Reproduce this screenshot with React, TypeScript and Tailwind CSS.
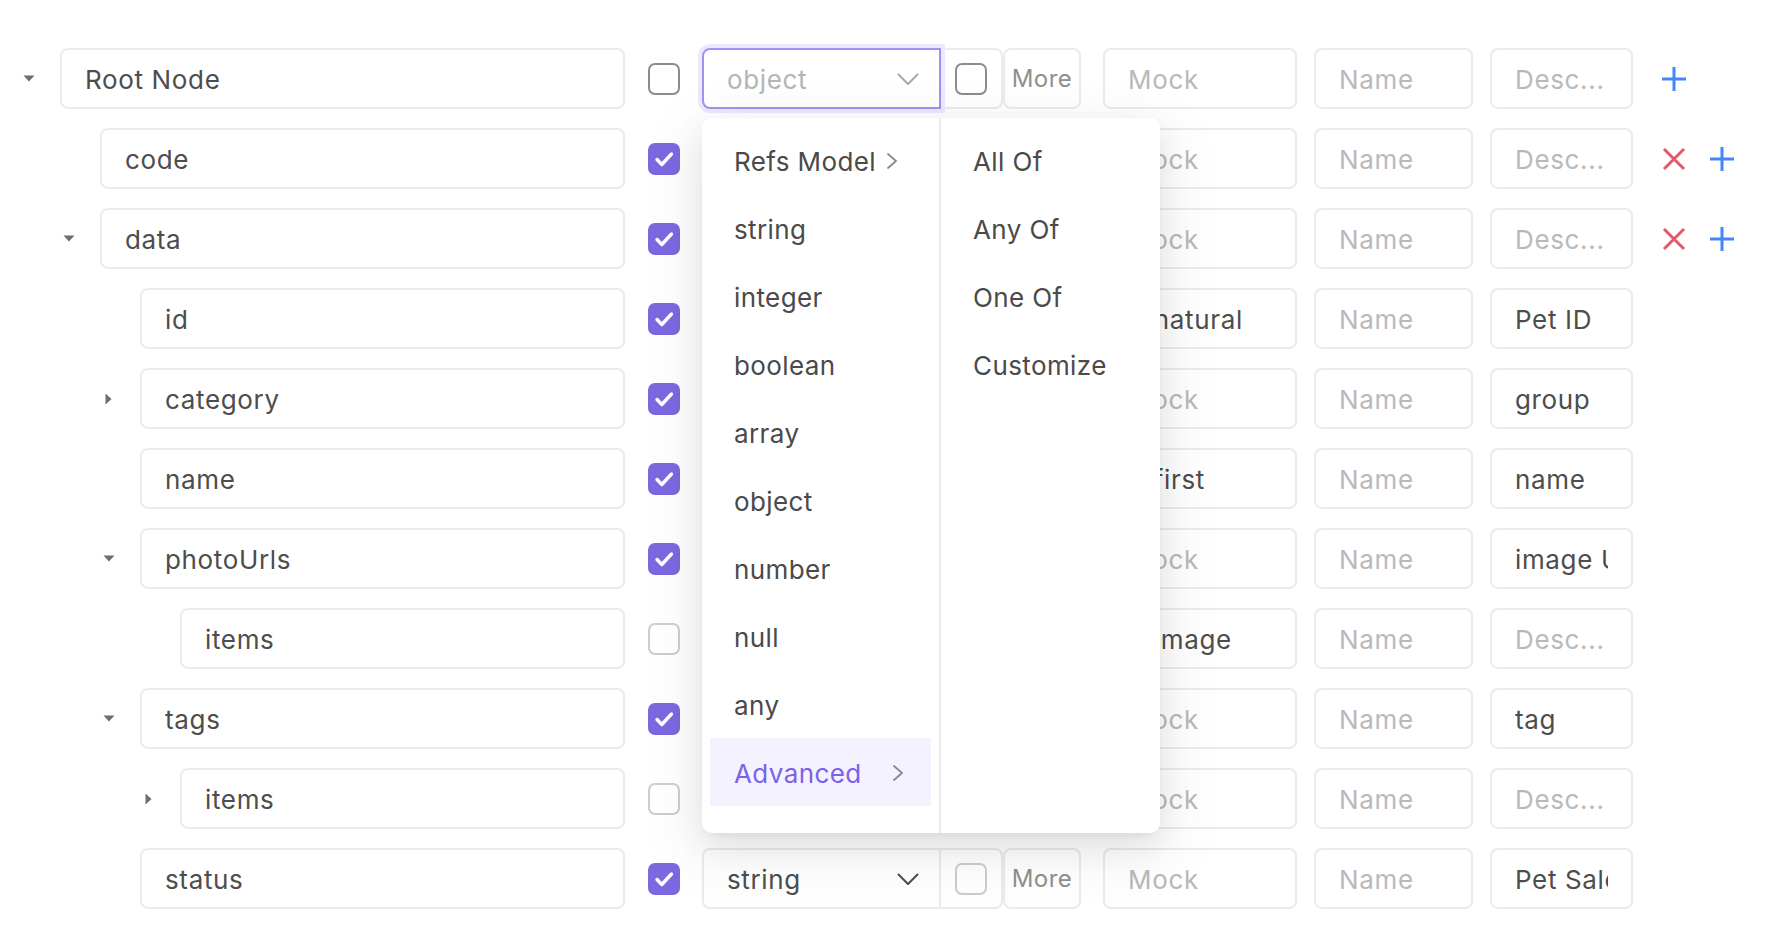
import React from 'react';

type Row = {
  name: string;
  depth: 0 | 1 | 2 | 3;
  arrow?: 'down' | 'right';
  checked: boolean;
  dark?: boolean;
  type: string;
  mock?: string;
  desc?: string;
  actions?: 'plus' | 'both';
};

const rows: Row[] = [
  { name: 'Root Node', depth: 0, arrow: 'down', checked: false, dark: true, type: 'object', actions: 'plus' },
  { name: 'code', depth: 1, checked: true, type: 'integer', actions: 'both' },
  { name: 'data', depth: 1, arrow: 'down', checked: true, type: 'object', actions: 'both' },
  { name: 'id', depth: 2, checked: true, type: 'integer', mock: '@natural', desc: 'Pet ID' },
  { name: 'category', depth: 2, arrow: 'right', checked: true, type: 'object', desc: 'group' },
  { name: 'name', depth: 2, checked: true, type: 'string', mock: '@first', desc: 'name' },
  { name: 'photoUrls', depth: 2, arrow: 'down', checked: true, type: 'array', desc: 'image URLs' },
  { name: 'items', depth: 3, checked: false, type: 'string', mock: '@image' },
  { name: 'tags', depth: 2, arrow: 'down', checked: true, type: 'array', desc: 'tag' },
  { name: 'items', depth: 3, arrow: 'right', checked: false, type: 'object' },
  { name: 'status', depth: 2, checked: true, type: 'string', desc: 'Pet Sales Status' },
];

const indent = ['pl-0', 'pl-[40px]', 'pl-[80px]', 'pl-[120px]'];

const leftItems = ['Refs Model', 'string', 'integer', 'boolean', 'array', 'object', 'number', 'null', 'any', 'Advanced'];
const rightItems = ['All Of', 'Any Of', 'One Of', 'Customize'];

function Field({ value, placeholder, className }: { value?: string; placeholder: string; className: string }) {
  return (
    <input
      readOnly
      value={value ?? ''}
      placeholder={placeholder}
      className={`h-[61px] shrink-0 rounded-[8px] border-2 border-[#ebebeb] bg-white px-[23px] pt-[2px] text-[26px] tracking-[0.025em] text-[#4d4d4d] outline-none placeholder:text-[#b9b9b9] ${className}`}
    />
  );
}

function Checkbox({ checked, dark }: { checked: boolean; dark?: boolean }) {
  if (checked) {
    return (
      <div className="flex h-[32px] w-[32px] shrink-0 items-center justify-center rounded-[7px] bg-[#7e68e0]">
        <svg viewBox="0 0 32 32" width="32" height="32">
          <path d="M9 16.5l4.8 5L23.5 11" stroke="white" strokeWidth="3.4" fill="none" strokeLinecap="round" strokeLinejoin="round" />
        </svg>
      </div>
    );
  }
  return (
    <div
      className={`h-[32px] w-[32px] shrink-0 rounded-[7px] border-2 bg-white ${dark ? 'border-[#8c8c8c]' : 'border-[#cdcdcd]'}`}
    />
  );
}

function Triangle({ dir }: { dir: 'down' | 'right' }) {
  if (dir === 'down') {
    return (
      <svg width="12" height="7" viewBox="0 0 12 7">
        <path d="M0.5 0.5H11.5L6 6.5Z" fill="#6e6e6e" />
      </svg>
    );
  }
  return (
    <svg width="7" height="12" viewBox="0 0 7 12">
      <path d="M0.5 0.5V11.5L6.5 6Z" fill="#6e6e6e" />
    </svg>
  );
}

function Chevron({ color }: { color: string }) {
  return (
    <svg width="22" height="13" viewBox="0 0 22 13">
      <path d="M1.5 1.5L11 11L20.5 1.5" stroke={color} strokeWidth="2" fill="none" strokeLinecap="round" strokeLinejoin="round" />
    </svg>
  );
}

function SmallRight() {
  return (
    <svg width="12" height="18" viewBox="0 0 12 18" className="shrink-0">
      <path d="M2 2L10 9L2 16" stroke="#8a8a8a" strokeWidth="1.8" fill="none" strokeLinecap="round" strokeLinejoin="round" />
    </svg>
  );
}

function Plus() {
  return (
    <svg width="24" height="24" viewBox="0 0 24 24" className="shrink-0">
      <path d="M12 0V24M0 12H24" stroke="#4386f5" strokeWidth="3" />
    </svg>
  );
}

function Cross() {
  return (
    <svg width="24" height="24" viewBox="0 0 24 24" className="shrink-0">
      <path d="M2 2L22 22M22 2L2 22" stroke="#e3596b" strokeWidth="3" />
    </svg>
  );
}

function Dropdown() {
  return (
    <div className="absolute left-0 top-[70px] z-20 flex h-[715px] w-[458px] rounded-[10px] bg-white tracking-[0.025em] shadow-[0_12px_32px_0_rgba(0,0,0,0.08),0_6px_12px_-8px_rgba(0,0,0,0.12),0_18px_56px_16px_rgba(0,0,0,0.05)]">
      <div className="flex w-[239px] shrink-0 flex-col border-r-2 border-[#ececec] px-[8px] pt-[8px]">
        {leftItems.map((it) => {
          const active = it === 'Advanced';
          const hasArrow = it === 'Refs Model' || active;
          return (
            <div
              key={it}
              className={`flex h-[68px] items-center pl-[24px] pr-[27px] pt-[2px] text-[26px] ${
                active ? 'bg-[#f4f2ff] text-[#7b62e8]' : 'text-[#4a4a4a]'
              } ${it === 'Refs Model' ? 'gap-[10px]' : 'justify-between'}`}
            >
              <span className="whitespace-nowrap">{it}</span>
              {hasArrow && <SmallRight />}
            </div>
          );
        })}
      </div>
      <div className="flex flex-1 flex-col px-[8px] pt-[8px]">
        {rightItems.map((it) => (
          <div key={it} className="flex h-[68px] items-center pl-[24px] pt-[2px] text-[26px] text-[#4a4a4a]">
            {it}
          </div>
        ))}
      </div>
    </div>
  );
}

function TypeGroup({ row, focused, covered }: { row: Row; focused: boolean; covered: boolean }) {
  return (
    <div className="relative ml-[22px] flex shrink-0">
      <div
        className={`relative z-[1] flex h-[61px] w-[239px] items-center justify-between rounded-l-[8px] border-2 bg-white pl-[23px] pr-[20px] pt-[2px] text-[26px] tracking-[0.025em] ${
          focused
            ? 'border-[#a391f2] text-[#b5b5b5] shadow-[0_0_0_4px_#ece8fd]'
            : 'border-[#ebebeb] text-[#4d4d4d]'
        }`}
      >
        <span className={covered ? 'invisible' : ''}>{row.type}</span>
        <Chevron color={focused ? '#a9a9a9' : '#4d4d4d'} />
      </div>
      <div className="flex h-[61px] w-[62px] items-center justify-center rounded-r-[8px] border-2 border-l-0 border-[#ebebeb] bg-white">
        <Checkbox checked={false} dark={focused} />
      </div>
      <div className="flex h-[61px] w-[78px] items-center justify-center rounded-[8px] border-2 border-[#ebebeb] bg-white pt-[1px] text-[24px] tracking-[0.02em] text-[#8f8f8f]">
        <span className={covered ? 'invisible' : ''}>More</span>
      </div>
      {focused && <Dropdown />}
    </div>
  );
}

export default function App() {
  return (
    <div className="h-[928px] w-full overflow-hidden bg-white font-['Inter','Noto_Sans',sans-serif]">
      <div className="flex flex-col gap-[19px] pt-[48px]">
        {rows.map((row, i) => (
          <div key={i} className="flex h-[61px] items-center">
            <div className={`flex w-[625px] shrink-0 items-center ${indent[row.depth]}`}>
              <div className="flex w-[60px] shrink-0 justify-center pr-[3px]">
                {row.arrow && <Triangle dir={row.arrow} />}
              </div>
              <Field value={row.name} placeholder="" className="min-w-0 flex-1" />
            </div>
            <div className="ml-[23px] flex">
              <Checkbox checked={row.checked} dark={row.dark} />
            </div>
            <TypeGroup row={row} focused={i === 0} covered={i > 0 && i < rows.length - 1} />
            <Field value={row.mock} placeholder="Mock" className="ml-[22px] w-[194px]" />
            <Field placeholder="Name" className="ml-[17px] w-[159px]" />
            <Field value={row.desc} placeholder="Desc..." className="ml-[17px] w-[143px]" />
            {row.actions && (
              <div className="ml-[29px] flex items-center gap-[24px]">
                {row.actions === 'both' && <Cross />}
                <Plus />
              </div>
            )}
          </div>
        ))}
      </div>
    </div>
  );
}
